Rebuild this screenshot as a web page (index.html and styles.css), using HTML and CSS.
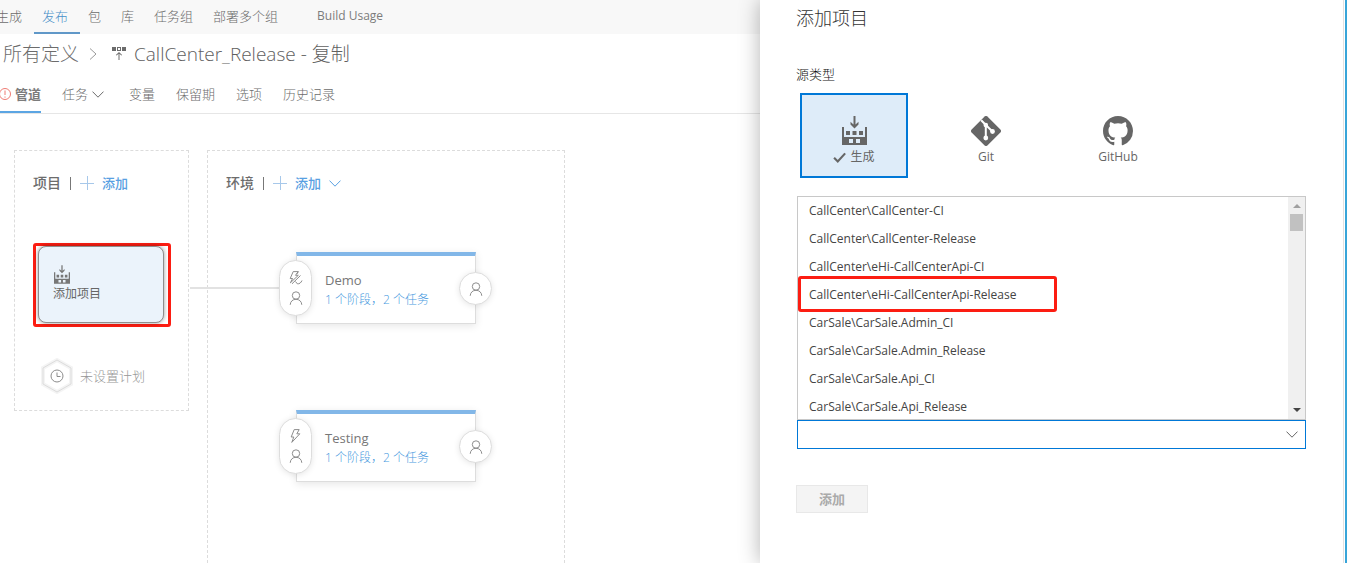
FILE: index.html
```html
<!DOCTYPE html>
<html lang="zh-CN">
<head>
<meta charset="utf-8">
<title>CallCenter_Release - 复制</title>
<link rel="stylesheet" href="styles.css">
</head>
<body>
<svg class="sprite" aria-hidden="true">
  <symbol id="i-build" viewBox="0 0 25 29">
    <path d="M11.5 0h2v8.600l3-2.800v2.700L12.500 12.500l-4-4V5.800l3 2.800z"/>
    <path d="M0 11h2v10h21V11h2v18H0zM7 23v4h4v-4zm7 0v4h4v-4z" fill-rule="evenodd"/>
    <path d="M4 15h4v4H4zM10.500 15h4v4h-4zM17 15h4v4h-4z"/>
  </symbol>
  <symbol id="i-person" viewBox="0 0 14 14">
    <circle cx="7" cy="4.500" r="3.700"/><path d="M1.200 13.800C1.400 10.300 3.800 8.300 7 8.300s5.600 2 5.800 5.500"/>
  </symbol>
  <symbol id="i-bolt" viewBox="0 0 14 14">
    <path d="M5.200.6h5L7.800 4.800h3L2.800 13.400l2-5.400H2.200z"/>
  </symbol>
  <symbol id="i-bolt-person" viewBox="0 0 14 14">
    <path d="M4.200.6h5L6.500 4.300h2.800L1.400 11.800l2.200-4.300H1.200zM9.500.6L7.800 3M11.500 4.500L3 12.800M6.500 10.500l1.800 2.300c2 .3 3.800-1 4.700-3.300"/>
  </symbol>
  <symbol id="i-chevron" viewBox="0 0 12 7"><path d="M.5.600L6 6.200 11.500.6"/></symbol>
  <symbol id="i-plus" viewBox="0 0 14 14"><path d="M7.500 0v14M0 7.500h14"/></symbol>
</svg>

<div class="app">
  <main class="workspace">
    <nav class="hub-nav">
      <a href="#">生成</a>
      <a href="#" class="current">发布</a>
      <a href="#">包</a>
      <a href="#">库</a>
      <a href="#">任务组</a>
      <a href="#">部署多个组</a>
      <a href="#" class="extension">Build Usage</a>
    </nav>

    <header class="breadcrumb">
      <a href="#">所有定义</a>
      <svg class="crumb-arrow" viewBox="0 0 8 12"><path d="M1 .5L7 6l-6 5.500"/></svg>
      <svg class="release-icon" viewBox="0 0 14 14">
        <path d="M0 0h4v4H0zM10 0h4v4h-4zM5 0h4v4H5zm1 1v2h2V1z" fill-rule="evenodd"/>
        <path d="M6.500 6.800L4.600 8.600l-.7-.7L7 5l3.100 2.900-.7.700-1.900-1.800V13h-1z"/>
      </svg>
      <h1>CallCenter_Release - 复制</h1>
    </header>

    <nav class="tabs">
      <a href="#" class="active">
        <svg class="alert" viewBox="0 0 12 12"><circle cx="6" cy="6" r="5.500"/><path d="M6 2.500v4.500M6 8.500v1.200"/></svg>管道</a>
      <a href="#">任务<svg class="chevron"><use href="#i-chevron"/></svg></a>
      <a href="#">变量</a>
      <a href="#">保留期</a>
      <a href="#">选项</a>
      <a href="#">历史记录</a>
    </nav>

    <div class="pipeline">
      <section class="stage artifacts">
        <div class="stage-head">
          <h2>项目</h2>
          <button type="button"><svg class="plus"><use href="#i-plus"/></svg>添加</button>
        </div>
        <div class="highlight">
          <button type="button" class="artifact">
            <svg class="build-small"><use href="#i-build"/></svg>
            添加项目
          </button>
        </div>
        <div class="schedule">
          <svg class="hexagon" viewBox="0 0 32 36">
            <path class="halo" d="M16 2l14 8v16l-14 8-14-8V10z"/>
            <path class="edge" d="M16 2l14 8v16l-14 8-14-8V10z"/>
            <circle cx="16" cy="18" r="6"/><path d="M16 14.500V18.500h3.500"/>
          </svg>
          未设置计划
        </div>
      </section>

      <section class="stage environments">
        <div class="stage-head">
          <h2>环境</h2>
          <button type="button"><svg class="plus"><use href="#i-plus"/></svg>添加<svg class="chevron"><use href="#i-chevron"/></svg></button>
        </div>
        <div class="env-list">
          <article class="env linked">
            <button type="button" class="pre" aria-label="部署前条件">
              <svg><use href="#i-bolt-person"/></svg><svg><use href="#i-person"/></svg>
            </button>
            <h3>Demo</h3>
            <a href="#">1 个阶段，2 个任务</a>
            <button type="button" class="post" aria-label="部署后条件"><svg><use href="#i-person"/></svg></button>
          </article>
          <article class="env">
            <button type="button" class="pre" aria-label="部署前条件">
              <svg><use href="#i-bolt"/></svg><svg><use href="#i-person"/></svg>
            </button>
            <h3>Testing</h3>
            <a href="#">1 个阶段，2 个任务</a>
            <button type="button" class="post" aria-label="部署后条件"><svg><use href="#i-person"/></svg></button>
          </article>
        </div>
      </section>
    </div>
  </main>

  <aside class="panel">
    <div class="panel-body">
      <h2>添加项目</h2>
      <h3 id="source-label">源类型</h3>
      <div class="sources" role="group" aria-labelledby="source-label">
        <button type="button" class="source selected" aria-pressed="true">
          <svg class="build-large"><use href="#i-build"/></svg>
          <span><svg class="check" viewBox="0 0 12 10"><path d="M1 5.200l3.400 3.400L11.200 1.200"/></svg>生成</span>
        </button>
        <button type="button" class="source">
          <svg class="brand" viewBox="0 0 30 30">
            <path class="solid" d="M13.600.6a2 2 0 0 1 2.800 0l13 13a2 2 0 0 1 0 2.800l-13 13a2 2 0 0 1-2.800 0l-13-13a2 2 0 0 1 0-2.800z"/>
            <path class="cut" d="M10.200 4.200L14.800 9v13M14.800 9l6.700 6.500"/>
            <circle class="dot" cx="14.800" cy="9" r="2.300"/><circle class="dot" cx="14.800" cy="22" r="2.400"/><circle class="dot" cx="21.500" cy="15.500" r="2.400"/>
          </svg>
          <span>Git</span>
        </button>
        <button type="button" class="source">
          <svg class="brand" viewBox="0 0 16 16">
            <path class="solid" d="M8 0C3.580 0 0 3.580 0 8c0 3.540 2.290 6.530 5.470 7.590.4.070.55-.17.55-.38 0-.19-.01-.82-.01-1.490-2.010.37-2.530-.49-2.690-.94-.09-.23-.48-.94-.82-1.130-.28-.15-.68-.52-.01-.53.63-.01 1.080.58 1.230.82.72 1.210 1.870.87 2.330.66.07-.52.28-.87.51-1.070-1.780-.2-3.640-.89-3.640-3.950 0-.87.310-1.590.82-2.150-.08-.2-.36-1.020.08-2.120 0 0 .67-.21 2.200.82.640-.18 1.320-.27 2-.27s1.360.09 2 .27c1.530-1.040 2.200-.82 2.200-.82.440 1.100.160 1.920.08 2.120.510.560.820 1.270.820 2.150 0 3.070-1.870 3.750-3.650 3.950.290.250.540.730.540 1.480 0 1.070-.01 1.930-.01 2.200 0 .210.150.460.550.380A8.010 8.010 0 0 0 16 8c0-4.420-3.580-8-8-8z"/>
          </svg>
          <span>GitHub</span>
        </button>
      </div>

      <div class="picker">
        <div class="popup">
          <ul role="listbox" aria-label="源">
            <li role="option">CallCenter\CallCenter-CI</li>
            <li role="option">CallCenter\CallCenter-Release</li>
            <li role="option">CallCenter\eHi-CallCenterApi-CI</li>
            <li role="option" class="marked">CallCenter\eHi-CallCenterApi-Release</li>
            <li role="option">CarSale\CarSale.Admin_CI</li>
            <li role="option">CarSale\CarSale.Admin_Release</li>
            <li role="option">CarSale\CarSale.Api_CI</li>
            <li role="option">CarSale\CarSale.Api_Release</li>
          </ul>
          <div class="scrollbar">
            <svg class="up" viewBox="0 0 8 4"><path d="M0 4l4-4 4 4z"/></svg>
            <div class="thumb"></div>
            <svg class="down" viewBox="0 0 8 4"><path d="M0 0l4 4 4-4z"/></svg>
          </div>
        </div>
        <div class="combo">
          <input type="text" role="combobox" aria-label="源" aria-expanded="true">
          <svg class="chevron"><use href="#i-chevron"/></svg>
        </div>
      </div>
      <button type="button" class="submit" disabled>添加</button>
    </div>
  </aside>
</div>
</body>
</html>
```
FILE: styles.css
```css
*, *::before, *::after { box-sizing: border-box; }

body {
  margin: 0;
  font-family: "Open Sans", "Noto Sans CJK SC", sans-serif;
  font-size: 13px;
  line-height: 20px;
  color: #6c6c6c;
  background: #fff;
  overflow: hidden;
}

h1, h2, h3, ul { margin: 0; padding: 0; font-weight: 400; }
ul { list-style: none; }
a { color: inherit; text-decoration: none; white-space: nowrap; }
button { font: inherit; color: inherit; background: none; border: 0; padding: 0; white-space: nowrap; }
svg { flex: none; fill: currentColor; }
.sprite { position: absolute; width: 0; height: 0; }

.app { display: flex; height: 100vh; }
.workspace { flex: 1; min-width: 0; display: flex; flex-direction: column; overflow: hidden; }

.hub-nav {
  display: flex;
  height: 34px;
  padding-left: 1px;
  margin-left: -13px;
  background: #f8f8f8;
  font-weight: 300;
}
.hub-nav a { padding: 6px 12px 6px 8px; }
.hub-nav .current { color: #4a90c8; border-bottom: 2px solid #6098c8; }
.hub-nav .extension { margin-left: 19px; font-size: 12px; font-weight: 400; color: #7c7c7c; }

.breadcrumb {
  display: flex;
  align-items: center;
  height: 40px;
  padding-left: 3px;
  font-size: 19px;
  line-height: 28px;
  font-weight: 300;
}
.breadcrumb h1 { margin-left: 8px; font-size: 19px; font-weight: 300; white-space: nowrap; color: #606060; }
.crumb-arrow { width: 8px; height: 12px; margin: 0 15px 0 10px; fill: none; stroke: #999; }
.release-icon { width: 14px; height: 14px; }

.tabs {
  display: flex;
  gap: 21px;
  height: 40px;
  border-bottom: 1px solid #e6e6e6;
  font-weight: 300;
}
.tabs a { display: flex; align-items: center; padding-top: 1px; }
.tabs .active { font-weight: 700; border-bottom: 2px solid #5ba5e3; padding-top: 3px; color: #7c7c7c; }
.alert { width: 12px; height: 12px; margin: 0 4px 0 -1px; fill: none; stroke: #ee7b73; }
.chevron { width: 12px; height: 7px; fill: none; stroke: currentColor; }
.tabs .chevron { margin: 0 4px; }

.pipeline { flex: 1; display: flex; align-items: flex-start; gap: 18px; padding: 36px 14px 0; }
.stage { border: 1px dashed #dcdcdc; padding: 22px 17px; }
.artifacts { width: 175px; height: 261px; }
.environments { width: 358px; align-self: stretch; border-bottom: 0; }

.stage-head { display: flex; align-items: center; gap: 9px; padding-left: 1px; }
.stage-head h2 { font-size: 14px; font-weight: 500; }
.stage-head button { display: flex; align-items: center; gap: 8px; color: #58a0e2; font-weight: 500; }
.stage-head button::before { content: ""; width: 1px; height: 13px; margin-right: 1px; background: #777; }
.plus { width: 14px; height: 14px; fill: none; stroke: #a7c8ea; }

.highlight {
  width: 138px;
  height: 84px;
  margin: 50px 0 31px 1px;
  padding: 0 4px 1px 2px;
  border: 3px solid #fc1d12;
  border-radius: 3px;
}
.artifact {
  display: flex;
  flex-direction: column;
  align-items: flex-start;
  width: 100%;
  height: 100%;
  padding: 18px 14px 0;
  border: 1px solid #8e8e8e;
  border-radius: 8px;
  background: #ebf3fb;
  box-shadow: 0 0 4px rgba(0, 0, 0, .4);
  font-size: 12px;
  color: #666;
}
.build-small { width: 16px; height: 19px; margin-left: 1px; color: #777; }

.schedule { display: flex; align-items: center; gap: 7px; padding-left: 9px; font-weight: 300; color: #969696; }
.hexagon { width: 32px; height: 36px; fill: none; stroke: #8c8c8c; }
.hexagon .halo { stroke: #f4f4f4; stroke-width: 4; }
.hexagon .edge { stroke: #dcdcdc; }

.env-list { display: flex; flex-direction: column; gap: 86px; padding: 59px 0 0 71px; }
.env {
  position: relative;
  width: 180px;
  height: 72px;
  padding: 14px 0 0 28px;
  border: 1px solid #ddd;
  border-top: 4px solid #82b7e8;
  box-shadow: 0 2px 8px rgba(0, 0, 0, .1);
}
.env h3 { font-size: 13px; color: #777; }
.env a { font-size: 12px; font-weight: 300; color: #4a9be0; display: block; }
.env > button {
  position: absolute;
  display: flex;
  flex-direction: column;
  align-items: center;
  justify-content: center;
  gap: 6px;
  width: 33px;
  border: 1px solid #ddd;
  border-radius: 17px;
  background: #fff;
  box-shadow: 0 1px 6px rgba(0, 0, 0, .1);
}
.env > button svg { width: 14px; height: 14px; fill: none; stroke: #8d8d8d; }
.env .pre { left: -18px; top: 4px; height: 56px; }
.env .post { right: -17px; top: 16px; height: 33px; }
.linked::before {
  content: "";
  position: absolute;
  right: 100%;
  top: 31px;
  width: 107px;
  border-top: 2px solid #e2e2e2;
}

.panel {
  position: relative;
  width: 594px;
  padding-right: 7px;
  background: #fff;
  box-shadow: 0 0 20px rgba(0, 0, 0, .3);
}
.panel-body {
  height: 100%;
  padding: 5px 39px 0 36px;
  border-right: 2px solid #38a5d9;
  box-shadow: inset -1px 0 #fff, inset -2px 0 #e2e2e2;
  color: #333;
}
.panel h2 { font-size: 18px; line-height: 26px; font-weight: 300; }
.panel h3 { margin-top: 33px; font-size: 13px; font-weight: 300; color: #111; }

.sources { display: flex; gap: 24px; margin: 9px 0 18px 4px; }
.source {
  display: flex;
  flex-direction: column;
  align-items: center;
  justify-content: flex-end;
  gap: 1px;
  width: 108px;
  height: 85px;
  padding-bottom: 9px;
  border: 2px solid transparent;
  font-size: 12px;
  color: #666;
}
.source.selected { border-color: #0078d7; background: #deecf9; }
.source span { display: flex; align-items: center; gap: 4px; }
.build-large { width: 25px; height: 29px; margin-bottom: 1px; }
.brand { width: 30px; height: 30px; }
.brand .cut { fill: none; stroke: #fff; stroke-width: 2; }
.brand .dot { fill: #fff; }
.check { width: 13px; height: 11px; fill: none; stroke: #666; stroke-width: 2; }

.picker { margin-left: 1px; }
.popup { display: flex; border: 1px solid #c8c8c8; height: 224px; }
.popup ul { flex: 1; }
.popup li { position: relative; padding: 4px 12px 4px 11px; font-size: 12px; color: #444; }
.marked::after {
  content: "";
  position: absolute;
  left: 0;
  top: -5px;
  width: 259px;
  height: 36px;
  border: 3px solid #fc1d12;
  border-radius: 3px;
}
.scrollbar {
  display: flex;
  flex-direction: column;
  align-items: center;
  width: 17px;
  padding: 7px 0;
  background: #f0f0f0;
}
.scrollbar svg { width: 8px; height: 4px; }
.scrollbar .up { color: #a0a0a0; }
.scrollbar .down { margin-top: auto; color: #444; }
.thumb { width: 13px; height: 17px; margin-top: 6px; background: #c1c1c1; }

.combo { display: flex; align-items: center; height: 29px; padding-right: 7px; border: 1px solid #0078d7; color: #666; }
.combo input { flex: 1; min-width: 0; height: 100%; padding: 0 12px; border: 0; outline: 0; background: none; font: inherit; }

.submit {
  width: 72px;
  height: 28px;
  margin-top: 36px;
  border: 1px solid #e8e8e8;
  background: #f4f4f4;
  color: #aaa;
  font-weight: 700;
}
```
